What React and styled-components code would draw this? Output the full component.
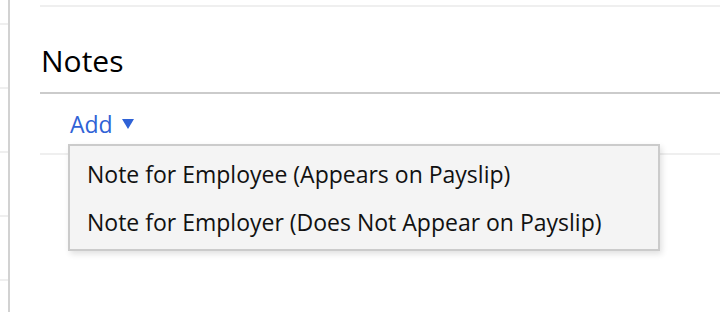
import React from "react";
import styled, { createGlobalStyle } from "styled-components";

const GlobalStyle = createGlobalStyle`
  html, body {
    margin: 0;
    padding: 0;
    background: #fff;
  }
  body {
    font-family: "Open Sans", "Noto Sans", sans-serif;
    color: #000;
  }
`;

const Page = styled.div`
  display: flex;
  width: 720px;
  height: 312px;
  overflow: hidden;
`;

const Rail = styled.div`
  width: 8px;
  flex: none;
  border-right: 2px solid #d2d2d2;
  background: repeating-linear-gradient(
    to bottom,
    transparent 0 23px,
    #efefef 23px 25px,
    transparent 25px 64px
  );
`;

const Content = styled.div`
  flex: 1;
  padding-left: 30px;
  padding-top: 5px;
`;

const Rule = styled.div`
  height: 2px;
  background: ${({ strong }) => (strong ? "#cbcbcb" : "#efefef")};
`;

const Heading = styled.h2`
  margin: 0;
  height: 85px;
  box-sizing: border-box;
  padding-top: 34px;
  padding-left: 1px;
  font-size: 30px;
  line-height: 40px;
  font-weight: 400;
  color: #000;
`;

const ActionRow = styled.div`
  position: relative;
  height: 59px;
  padding-left: 30px;
  display: flex;
  align-items: center;
`;

const AddButton = styled.button`
  display: flex;
  align-items: center;
  gap: 9px;
  padding: 0;
  border: none;
  background: none;
  font-family: inherit;
  font-size: 23px;
  color: #2f62d6;
  cursor: pointer;
`;

const Caret = styled.svg`
  width: 12px;
  height: 10px;
  fill: currentColor;
`;

const Menu = styled.ul`
  position: absolute;
  left: 28px;
  top: 50px;
  width: 592px;
  height: 107px;
  box-sizing: border-box;
  margin: 0;
  padding: 4px 0 0;
  list-style: none;
  background: #f4f4f4;
  border: 2px solid #cbcbcb;
  box-shadow: 2px 3px 6px rgba(0, 0, 0, 0.12);
  z-index: 10;
`;

const MenuItem = styled.li`
  height: 48px;
  line-height: 48px;
  padding: 0 17px;
  font-size: 23px;
  color: #111;
  white-space: nowrap;
  cursor: pointer;
`;

export default function App() {
  return (
    <>
      <GlobalStyle />
      <Page>
        <Rail />
        <Content>
          <Rule />
          <Heading>Notes</Heading>
          <Rule strong />
          <ActionRow>
            <AddButton>
              Add
              <Caret viewBox="0 0 12 10">
                <path d="M0 0h12L6 10z" />
              </Caret>
            </AddButton>
            <Menu>
              <MenuItem>Note for Employee (Appears on Payslip)</MenuItem>
              <MenuItem>Note for Employer (Does Not Appear on Payslip)</MenuItem>
            </Menu>
          </ActionRow>
          <Rule />
        </Content>
      </Page>
    </>
  );
}
